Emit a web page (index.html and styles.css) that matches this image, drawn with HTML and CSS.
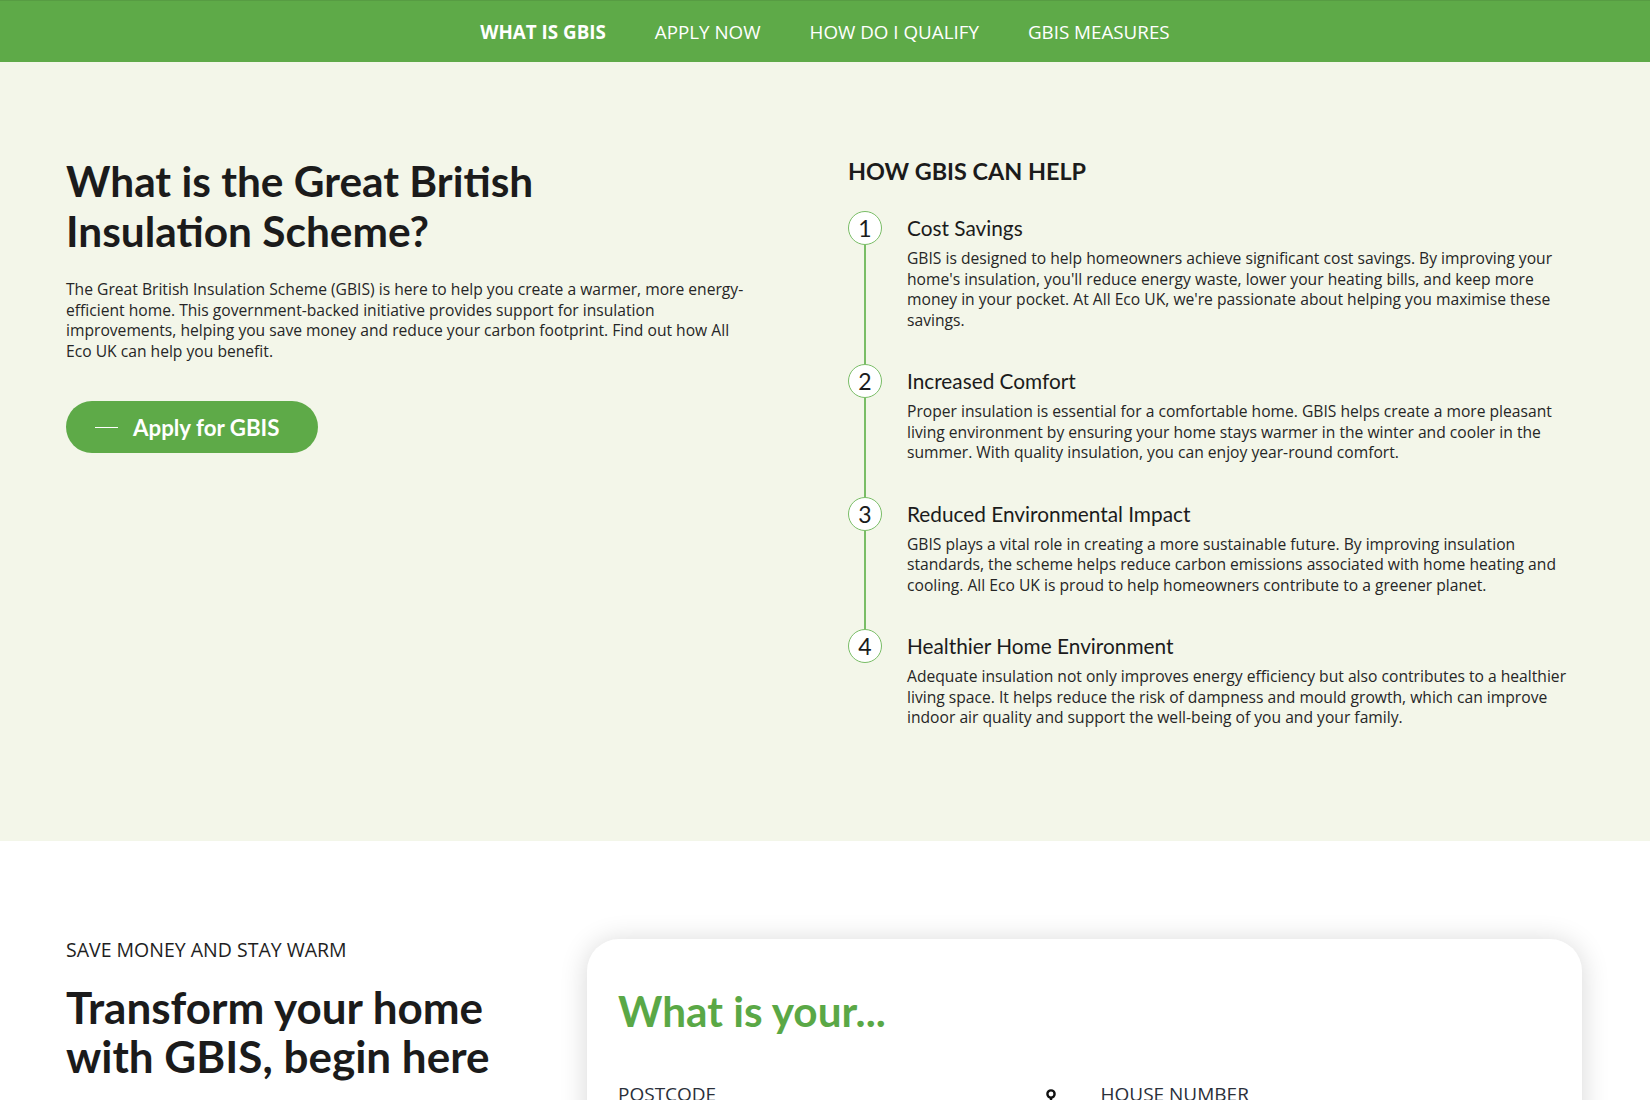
FILE: index.html
```html
<!DOCTYPE html>
<html lang="en">
<head>
<meta charset="utf-8">
<title>Great British Insulation Scheme</title>
<link rel="stylesheet" href="styles.css">
</head>
<body>
<nav class="topnav">
  <ul class="nav-list">
    <li><a class="nav-link active" href="#what">WHAT IS GBIS</a></li>
    <li><a class="nav-link" href="#apply">APPLY NOW</a></li>
    <li><a class="nav-link" href="#qualify">HOW DO I QUALIFY</a></li>
    <li><a class="nav-link" href="#measures">GBIS MEASURES</a></li>
  </ul>
</nav>

<section class="intro" id="what">
  <div class="container intro-grid">
    <div class="intro-left">
      <h1 class="title intro-title">What is the Great British Insulation Scheme?</h1>
      <p class="lead">The Great British Insulation Scheme (GBIS) is here to help you create a warmer, more energy-efficient home. This government-backed initiative provides support for insulation improvements, helping you save money and reduce your carbon footprint. Find out how All Eco UK can help you benefit.</p>
      <a class="btn-apply" href="#apply"><span class="btn-dash"></span>Apply for GBIS</a>
    </div>
    <div class="intro-right">
      <h2 class="help-title">HOW GBIS CAN HELP</h2>
      <ol class="steps">
        <li class="step">
          <div class="step-marker"><span class="step-num">1</span><span class="step-line"></span></div>
          <div class="step-body">
            <h3 class="step-title">Cost Savings</h3>
            <p class="step-text">GBIS is designed to help homeowners achieve significant cost savings. By improving your home's insulation, you'll reduce energy waste, lower your heating bills, and keep more money in your pocket. At All Eco UK, we're passionate about helping you maximise these savings.</p>
          </div>
        </li>
        <li class="step">
          <div class="step-marker"><span class="step-num">2</span><span class="step-line"></span></div>
          <div class="step-body">
            <h3 class="step-title">Increased Comfort</h3>
            <p class="step-text">Proper insulation is essential for a comfortable home. GBIS helps create a more pleasant living environment by ensuring your home stays warmer in the winter and cooler in the summer. With quality insulation, you can enjoy year-round comfort.</p>
          </div>
        </li>
        <li class="step">
          <div class="step-marker"><span class="step-num">3</span><span class="step-line"></span></div>
          <div class="step-body">
            <h3 class="step-title">Reduced Environmental Impact</h3>
            <p class="step-text">GBIS plays a vital role in creating a more sustainable future. By improving insulation standards, the scheme helps reduce carbon emissions associated with home heating and cooling. All Eco UK is proud to help homeowners contribute to a greener planet.</p>
          </div>
        </li>
        <li class="step">
          <div class="step-marker"><span class="step-num">4</span></div>
          <div class="step-body">
            <h3 class="step-title">Healthier Home Environment</h3>
            <p class="step-text">Adequate insulation not only improves energy efficiency but also contributes to a healthier living space. It helps reduce the risk of dampness and mould growth, which can improve indoor air quality and support the well-being of you and your family.</p>
          </div>
        </li>
      </ol>
    </div>
  </div>
</section>

<section class="start" id="apply">
  <div class="container start-grid">
    <div class="start-left">
      <p class="eyebrow">SAVE MONEY AND STAY WARM</p>
      <h2 class="title start-title">Transform your home with GBIS, begin here</h2>
    </div>
    <form class="card">
      <h2 class="card-title">What is your...</h2>
      <div class="fields">
        <div class="field">
          <div class="field-head">
            <label class="field-label" for="postcode">POSTCODE</label>
            <svg class="pin" width="12" height="16" viewBox="0 0 12 16" aria-hidden="true"><circle cx="6" cy="5" r="3.6" fill="none" stroke="#111" stroke-width="2.4"/><path d="M6 8.6v6.4" stroke="#111" stroke-width="2.4"/></svg>
          </div>
          <input class="field-input" id="postcode" type="text">
        </div>
        <div class="field">
          <div class="field-head">
            <label class="field-label" for="house">HOUSE NUMBER</label>
          </div>
          <input class="field-input" id="house" type="text">
        </div>
      </div>
    </form>
  </div>
</section>
</body>
</html>
```

FILE: styles.css
```css
* { box-sizing: border-box; }

html, body {
  margin: 0;
  padding: 0;
}

body {
  font-family: "Open Sans", "Liberation Sans", sans-serif;
  color: #262626;
  background: #ffffff;
  overflow: hidden;
}

.container {
  padding: 0 66px;
}

/* ---------- top nav ---------- */
.topnav {
  background: #5eaa48;
  border-top: 1px solid #579c43;
  height: 62px;
  display: flex;
  align-items: center;
  justify-content: center;
}

.nav-list {
  list-style: none;
  margin: 0;
  padding: 0;
  display: flex;
  gap: 49px;
}

.nav-link {
  color: #ffffff;
  text-decoration: none;
  font-size: 18.8px;
  font-weight: 400;
  line-height: 24px;
  display: block;
}

.nav-link.active {
  font-weight: 700;
}

/* ---------- intro ---------- */
.intro {
  background: #f3f6e9;
  padding: 90px 0 113px;
}

.intro-grid {
  display: grid;
  grid-template-columns: 1fr 1fr;
  gap: 46px;
}

.title {
  font-family: "Lato", "Liberation Sans", sans-serif;
  font-weight: 700;
  font-size: 42.4px;
  line-height: 50px;
  color: #1b1b1b;
  margin: 0;
}

.intro-title {
  max-width: 520px;
  margin-top: 4px;
}

.lead {
  font-size: 15.65px;
  line-height: 20.5px;
  margin: 23px 0 0;
  max-width: 690px;
}

.btn-apply {
  margin-top: 40px;
  display: inline-flex;
  align-items: center;
  gap: 15px;
  height: 52px;
  padding: 0 39px 0 29px;
  border-radius: 26px;
  background: #5eaa48;
  color: #ffffff;
  text-decoration: none;
  font-family: "Lato", "Liberation Sans", sans-serif;
  font-weight: 700;
  font-size: 22.3px;
}

.btn-dash {
  width: 23px;
  height: 1px;
  background: #ffffff;
}

.help-title {
  font-family: "Lato", "Liberation Sans", sans-serif;
  font-weight: 700;
  font-size: 23.4px;
  line-height: 30px;
  margin: 4px 0 0;
  color: #1b1b1b;
}

.steps {
  list-style: none;
  margin: 25px 0 0;
  padding: 0;
}

.step {
  display: grid;
  grid-template-columns: 34px 1fr;
  column-gap: 25px;
}

.step-marker {
  display: flex;
  flex-direction: column;
  align-items: center;
}

.step-num {
  width: 34px;
  height: 34px;
  flex: none;
  border: 1.5px solid #79bd66;
  border-radius: 50%;
  background: #ffffff;
  display: flex;
  align-items: center;
  justify-content: center;
  font-family: "Lato", "Liberation Sans", sans-serif;
  font-weight: 400;
  font-size: 23px;
  color: #1b1b1b;
}

.step-line {
  flex: 1;
  width: 1.5px;
  background: #79bd66;
}

.step-body {
  padding-bottom: 34px;
}

.step:last-child .step-body {
  padding-bottom: 0;
}

.step-title {
  font-family: "Lato", "Liberation Sans", sans-serif;
  font-weight: 400;
  font-size: 20.8px;
  line-height: 34px;
  margin: 0;
  color: #1b1b1b;
}

.step-text {
  font-size: 15.65px;
  line-height: 20.5px;
  margin: 3px 0 0;
  max-width: 665px;
}

/* ---------- start section ---------- */
.start {
  padding: 97px 0 60px;
}

.start-grid {
  display: grid;
  grid-template-columns: 480px 995px;
  justify-content: space-between;
  padding-right: 68px;
  align-items: start;
}

.eyebrow {
  margin: 0;
  font-size: 19.5px;
  line-height: 24px;
  color: #1e1e1e;
}

.start-title {
  margin-top: 21px;
  font-size: 44px;
  line-height: 49px;
  max-width: 460px;
}

.card {
  background: #ffffff;
  border-radius: 32px;
  box-shadow: 0 2px 28px rgba(0, 0, 0, 0.16);
  padding: 47px 31px 40px;
  margin: 1px 0 0;
}

.card-title {
  font-family: "Lato", "Liberation Sans", sans-serif;
  font-weight: 700;
  font-size: 42.3px;
  line-height: 50px;
  color: #5aa846;
  margin: 0;
}

.fields {
  margin-top: 46px;
  display: grid;
  grid-template-columns: 1fr 1fr;
  gap: 32px;
}

.field-head {
  display: flex;
  align-items: center;
  justify-content: space-between;
  padding-right: 12px;
  height: 24px;
}

.field-label {
  font-size: 19px;
  line-height: 24px;
  color: #2a2f3a;
}

.pin {
  display: block;
  margin-top: 6px;
}

.field-input {
  display: block;
  width: 100%;
  height: 48px;
  margin-top: 10px;
  border: 1px solid #cfd4c8;
  border-radius: 8px;
  background: #ffffff;
}
```
